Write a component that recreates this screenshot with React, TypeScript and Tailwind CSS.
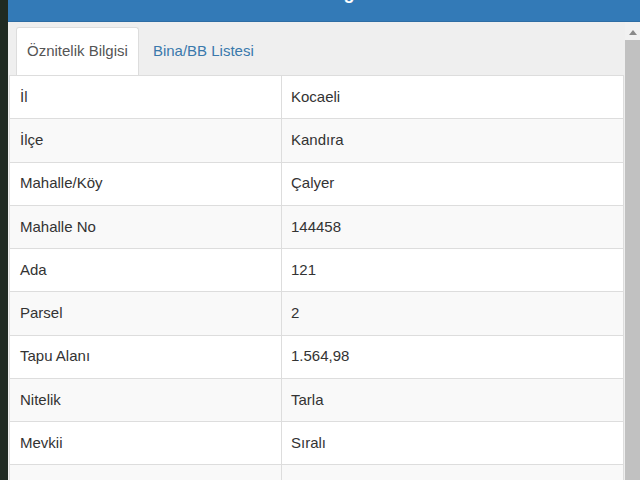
const ROWS: [string, string][] = [
  ['İl', 'Kocaeli'],
  ['İlçe', 'Kandıra'],
  ['Mahalle/Köy', 'Çalyer'],
  ['Mahalle No', '144458'],
  ['Ada', '121'],
  ['Parsel', '2'],
  ['Tapu Alanı', '1.564,98'],
  ['Nitelik', 'Tarla'],
  ['Mevkii', 'Sıralı'],
  ['Zemin Tipi', 'Ana Taşınmaz'],
  ['Pafta', '-'],
];

export default function App() {
  return (
    <div
      className="flex h-[480px] w-[640px] overflow-hidden bg-[#1c2620] text-[#333]"
      style={{ fontFamily: '"Liberation Sans", Arial, sans-serif' }}
    >
      {/* map edge behind the dialog */}
      <div className="w-[8px] shrink-0 bg-[#1f2a22]" />

      <div className="flex flex-1 flex-col">
        {/* dialog header, title scrolled mostly out of view */}
        <div className="relative h-[22px] shrink-0 overflow-hidden border-b border-[#2e6da4] bg-[#337ab7]">
          <div className="absolute left-0 right-0 top-[-17px] text-center text-[18px] font-bold leading-[20px] text-white">
            Parsel Bilgileri
          </div>
        </div>

        <div className="flex flex-1 bg-[#efefef]">
          <div className="flex flex-1 flex-col pt-[5px] pl-[1px]">
            {/* tabs */}
            <div className="flex h-[48px] shrink-0 items-stretch pl-[7px] text-[15px]">
              <div className="flex items-center rounded-t-[3px] border border-b-0 border-[#dddddd] bg-white px-[10px] text-[#555]">
                Öznitelik Bilgisi
              </div>
              <div className="flex items-center px-[14px] text-[#3a79ac]">Bina/BB Listesi</div>
            </div>

            {/* attribute table */}
            <div className="mr-[1px] border-l border-r border-t border-[#dddddd] bg-white text-[15px]">
              {ROWS.map(([label, value], i) => (
                <div
                  key={label}
                  className={`flex h-[43.25px] border-b border-[#dddddd] ${i % 2 === 1 ? 'bg-[#f9f9f9]' : 'bg-white'}`}
                >
                  <div className="flex w-[272px] shrink-0 items-center border-r border-[#dddddd] pl-[10px]">{label}</div>
                  <div className="flex flex-1 items-center pl-[9px]">{value}</div>
                </div>
              ))}
            </div>
          </div>

          {/* scrollbar */}
          <div className="flex w-[15px] shrink-0 flex-col bg-[#f1f1f1]">
            <div className="flex h-[18px] items-center justify-center pt-[2px]">
              <div className="h-0 w-0 border-x-[4px] border-b-[5px] border-x-transparent border-b-[#8a8a8a]" />
            </div>
            <div className="flex-1 bg-[#c1c1c1]" />
          </div>
        </div>
      </div>
    </div>
  );
}
